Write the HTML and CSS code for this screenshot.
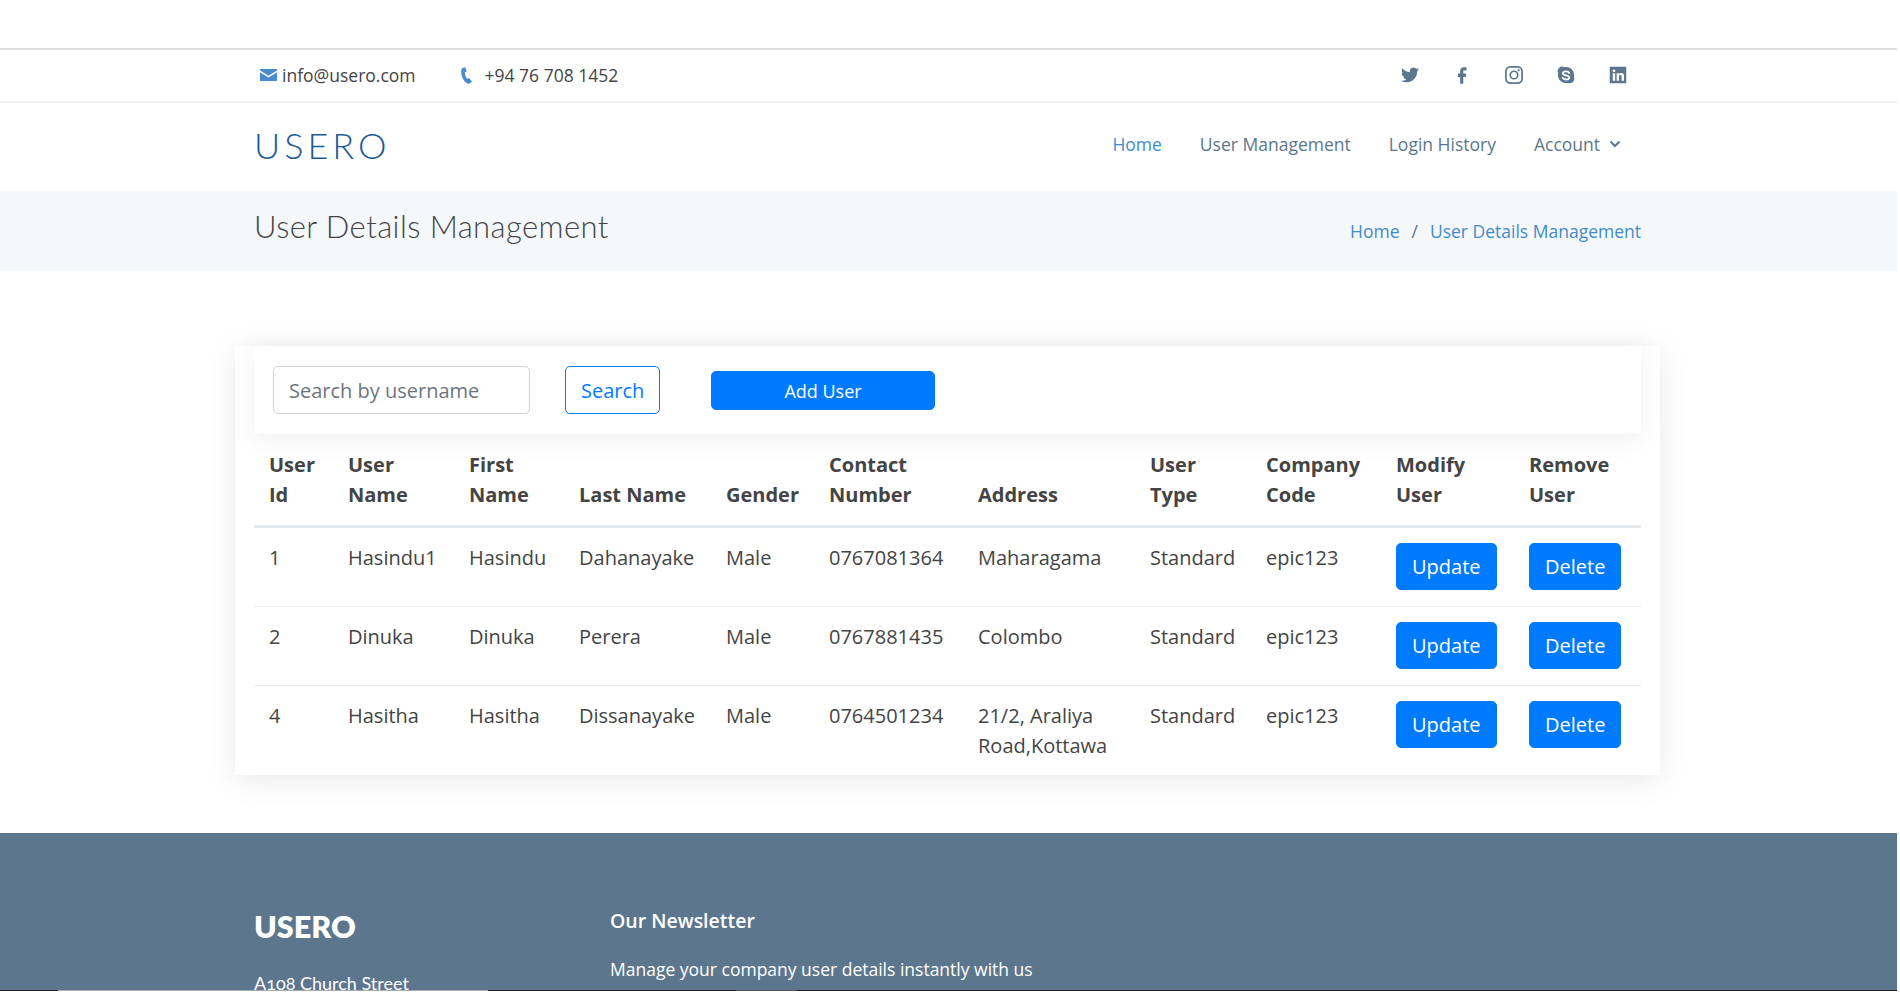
FILE: index.html
```html
<!DOCTYPE html>
<html lang="en">
<head>
<meta charset="utf-8">
<title>User Details Management</title>
<link rel="stylesheet" href="styles.css">
</head>
<body>
<div class="page">
  <div class="blank"></div>
  <div class="topbar">
    <div class="container topbar-row">
      <div class="contacts">
        <span class="contact">
          <svg class="ic-mail" viewBox="0 0 17 12"><path d="M0 0h17v1.6L8.5 6.8 0 1.6z"/><path d="M0 3.2l8.5 5.2L17 3.2V12H0z"/></svg>
          info@usero.com
        </span>
        <span class="contact contact-phone">
          <svg class="ic-phone" viewBox="0 0 14 18"><path d="M3.3.6L5.6 0l1.6 4.4-1.9 1.2c-.2 2 .7 5 2.4 7l2-.8 3.2 3.7-1.8 1.7c-1 .9-2.4 1-3.5.2C3.500 14.600 1 9.600 1.300 3.700 1.300 2.300 2 1 3.300.6z"/></svg>
          +94 76 708 1452
        </span>
      </div>
      <div class="socials">
        <svg class="soc" viewBox="0 0 24 24"><path d="M23.953 4.57a10 10 0 01-2.825.775 4.958 4.958 0 002.163-2.723c-.951.555-2.005.959-3.127 1.184a4.92 4.92 0 00-8.384 4.482C7.69 8.095 4.067 6.13 1.64 3.162a4.822 4.822 0 00-.666 2.475c0 1.71.87 3.213 2.188 4.096a4.904 4.904 0 01-2.228-.616v.06a4.923 4.923 0 003.946 4.827 4.996 4.996 0 01-2.212.085 4.936 4.936 0 004.604 3.417 9.867 9.867 0 01-6.102 2.105c-.39 0-.779-.023-1.17-.067a13.995 13.995 0 007.557 2.209c9.053 0 13.998-7.496 13.998-13.985 0-.21 0-.42-.015-.63A9.935 9.935 0 0024 4.59z"/></svg>
        <svg class="soc" viewBox="0 0 24 24"><path d="M14.500 6H18V1.500h-3.500C11.400 1.500 9.500 3.600 9.500 6.500V10H6.500v4.500h3v9h4.200v-9H17l.6-4.500h-3.900V7c0-.6.300-1 .8-1z"/></svg>
        <svg class="soc" viewBox="0 0 24 24"><rect x="1.200" y="1.200" width="21.600" height="21.600" rx="6" class="line"/><circle cx="12" cy="12" r="5" class="line"/><circle cx="18.200" cy="5.800" r="1.500"/></svg>
        <svg class="soc" viewBox="0 0 24 24"><path d="M7 .8a6 6 0 00-5.500 8.600A11 11 0 0014.600 22.500a6 6 0 007.900-7.900A11 11 0 009.400 1.500 6 6 0 007 .8z"/><path class="cut" d="M16.300 9.300C15.600 7.900 14 7.200 12 7.200c-2.400 0-4.100 1.100-4.100 2.700 0 3.500 8.400 1.800 8.400 5.300 0 1.700-1.800 2.800-4.300 2.800-2.100 0-3.800-.9-4.500-2.400"/></svg>
        <svg class="soc" viewBox="0 0 24 24"><path fill-rule="evenodd" d="M1 1h22v22H1zM5 9.500v10h3.200v-10zM6.600 4.500a1.900 1.900 0 100 3.800 1.900 1.900 0 000-3.800zM10.200 9.500v10h3.200v-5.300c0-1.500.6-2.300 1.800-2.300s1.600.8 1.600 2.300v5.300H20v-6c0-2.900-1.400-4.200-3.500-4.200-1.400 0-2.500.6-3.100 1.600V9.500z"/></svg>
      </div>
    </div>
  </div>
  <header class="navbar">
    <div class="container nav-row">
      <div class="logo">USERO</div>
      <nav class="menu">
        <a class="menu-link active">Home</a>
        <a class="menu-link">User Management</a>
        <a class="menu-link">Login History</a>
        <a class="menu-link">Account
          <svg class="chev" viewBox="0 0 12 8"><path d="M1.500 1.500L6 6l4.500-4.500"/></svg>
        </a>
      </nav>
    </div>
  </header>
  <section class="band">
    <div class="container band-row">
      <h1 class="page-title">User Details Management</h1>
      <div class="crumbs"><a>Home</a><span class="sep">/</span><a>User Details Management</a></div>
    </div>
  </section>
  <main class="main">
    <div class="card">
      <div class="toolbar">
        <input class="search-input" type="text" placeholder="Search by username">
        <button class="btn btn-outline">Search</button>
        <button class="btn btn-add">Add User</button>
      </div>
      <table class="users">
        <thead>
          <tr>
            <th class="c-id">User Id</th>
            <th class="c-user">User Name</th>
            <th class="c-first">First Name</th>
            <th class="c-last">Last Name</th>
            <th class="c-gender">Gender</th>
            <th class="c-contact">Contact Number</th>
            <th class="c-address">Address</th>
            <th class="c-type">User Type</th>
            <th class="c-code">Company Code</th>
            <th class="c-mod">Modify User</th>
            <th class="c-rem">Remove User</th>
          </tr>
        </thead>
        <tbody>
          <tr>
            <td>1</td><td>Hasindu1</td><td>Hasindu</td><td>Dahanayake</td><td>Male</td><td>0767081364</td><td>Maharagama</td><td>Standard</td><td>epic123</td>
            <td><button class="btn btn-primary">Update</button></td>
            <td><button class="btn btn-primary">Delete</button></td>
          </tr>
          <tr>
            <td>2</td><td>Dinuka</td><td>Dinuka</td><td>Perera</td><td>Male</td><td>0767881435</td><td>Colombo</td><td>Standard</td><td>epic123</td>
            <td><button class="btn btn-primary">Update</button></td>
            <td><button class="btn btn-primary">Delete</button></td>
          </tr>
          <tr>
            <td>4</td><td>Hasitha</td><td>Hasitha</td><td>Dissanayake</td><td>Male</td><td>0764501234</td><td>21/2, Araliya Road,Kottawa</td><td>Standard</td><td>epic123</td>
            <td><button class="btn btn-primary">Update</button></td>
            <td><button class="btn btn-primary">Delete</button></td>
          </tr>
        </tbody>
      </table>
    </div>
  </main>
  <footer class="footer">
    <div class="container footer-row">
      <div class="foot-brand">
        <h3 class="foot-logo">USERO</h3>
        <p class="foot-addr">A108 Church Street</p>
      </div>
      <div class="foot-news">
        <h4 class="foot-head">Our Newsletter</h4>
        <p class="foot-text">Manage your company user details instantly with us</p>
      </div>
    </div>
  </footer>
  <div class="strip">
    <span class="seg seg-dark-a"></span>
    <span class="seg seg-grey-a"></span>
    <span class="seg seg-dark-b"></span>
    <span class="seg seg-grey-b"></span>
    <span class="seg seg-dark-c"></span>
  </div>
</div>
</body>
</html>
```

FILE: styles.css
```css
* { box-sizing: border-box; }
html, body { margin: 0; padding: 0; background: #fff; height: 998px; overflow: hidden; }
body { font-family: "Open Sans", "Liberation Sans", sans-serif; font-size: 20px; line-height: 30px; color: #444; }
.page { width: 1897px; }
.container { width: 1425px; margin-left: 235px; padding: 0 19px; }

.blank { height: 50px; border-bottom: 2px solid #dedede; }
.topbar { height: 53px; border-bottom: 2px solid #f1f1f1; }
.topbar-row { display: flex; justify-content: space-between; align-items: center; height: 50px; }
.contacts { display: flex; padding-left: 6px; font-size: 17.500px; }
.contact { display: flex; align-items: center; gap: 5px; }
.contact-phone { margin-left: 44px; gap: 12px; }
.ic-mail { width: 17px; height: 12px; fill: #4a8bd0; }
.ic-phone { width: 13px; height: 17px; fill: #4a8bd0; }
.socials { display: flex; gap: 34px; padding-right: 14px; }
.soc { width: 18px; height: 18px; fill: #5c768d; display: block; }
.soc .line { fill: none; stroke: #5c768d; stroke-width: 2.300; }
.soc .cut { fill: none; stroke: #fff; stroke-width: 2.400; stroke-linecap: round; }

.navbar { height: 88px; }
.nav-row { display: flex; justify-content: space-between; align-items: center; height: 84px; }
.logo { font-family: "Lato", sans-serif; font-weight: 300; font-size: 36px; letter-spacing: 4px; color: #1c5c93; line-height: 44px; }
.menu { display: flex; gap: 38px; padding-right: 20px; padding-bottom: 2px; font-size: 17.500px; }
.menu-link { color: #5c768d; display: flex; align-items: center; gap: 9px; white-space: nowrap; }
.menu-link.active { color: #428bca; }
.chev { width: 12px; height: 8px; fill: none; stroke: #5c768d; stroke-width: 2; }

.band { height: 80px; background: #f5f8fb; }
.band-row { display: flex; justify-content: space-between; height: 80px; }
.page-title { margin: 0; padding-top: 17px; font-family: "Lato", sans-serif; font-weight: 300; font-size: 31px; letter-spacing: .42px; line-height: 36px; color: #444; }
.crumbs { padding-top: 25px; font-size: 17.500px; color: #5c768d; }
.crumbs a { color: #428bca; }
.sep { margin: 0 12px; }

.main { padding-top: 75px; height: 562px; }
.card { width: 1425px; margin-left: 235px; padding: 0 19px; height: 429px; background: #fff; box-shadow: 0 5px 30px rgba(0, 0, 0, .09); }
.toolbar { display: flex; align-items: center; height: 88px; padding-left: 19px; box-shadow: 0 5px 25px rgba(0, 0, 0, .07); position: relative; background: #fff; }
.search-input { width: 257px; height: 48px; padding: 0 15px; border: 1.250px solid #ced4da; border-radius: 5px; font: inherit; color: #495057; outline: none; }
.search-input::placeholder { color: #6c757d; opacity: 1; }
.btn { font: inherit; border: 1.250px solid #007bff; border-radius: 5px; padding: 7.500px 15px; cursor: pointer; display: inline-block; }
.btn-outline { margin-left: 35px; width: 95px; height: 48px; padding-top: 9px; background: #fff; color: #007bff; }
.btn-add { margin-left: 51px; width: 224px; height: 39px; padding: 2px 0 0; background: #007bff; color: #fff; font-size: 18px; }
.btn-primary { background: #007bff; color: #fff; }

.users { width: 100%; border-collapse: collapse; table-layout: fixed; }
.users th, .users td { padding: 15px; text-align: left; }
.users th { padding-top: 16px; vertical-align: bottom; font-weight: 700; border-bottom: 3px solid #e6e9ec; }
.users td { padding-bottom: 16px; vertical-align: top; border-top: 1.250px solid #e9ecef; }
.users tbody tr:first-child td { border-top: none; }
.c-id { width: 79px; }
.c-user { width: 121px; }
.c-first { width: 110px; }
.c-last { width: 147px; }
.c-gender { width: 103px; }
.c-contact { width: 149px; }
.c-address { width: 172px; }
.c-type { width: 116px; }
.c-code { width: 130px; }
.c-mod { width: 133px; }

.footer { height: 157px; background: #5c768d; overflow: hidden; color: #fff; }
.footer-row { display: flex; padding-top: 70px; }
.foot-brand { width: 356px; flex: none; }
.foot-logo { margin: 0; font-family: "Lato", sans-serif; font-weight: 800; font-size: 30.500px; line-height: 46px; }
.foot-addr { margin: 19px 0 0; font-family: "Lato", sans-serif; font-size: 18px; font-variant-numeric: oldstyle-nums; line-height: 30px; }
.foot-news { flex: 1; }
.foot-head { margin: 0; font-family: "Open Sans", sans-serif; font-weight: 600; font-size: 19.500px; line-height: 36px; }
.foot-text { margin: 15px 0 0; font-size: 17.500px; line-height: 30px; }

.strip { display: flex; height: 1px; }
.seg-dark-a { width: 58px; background: #222; }
.seg-grey-a { width: 430px; background: #aaa; }
.seg-dark-b { width: 248px; background: #222; }
.seg-grey-b { width: 61px; background: #555; }
.seg-dark-c { flex: 1; background: #222; }
```
